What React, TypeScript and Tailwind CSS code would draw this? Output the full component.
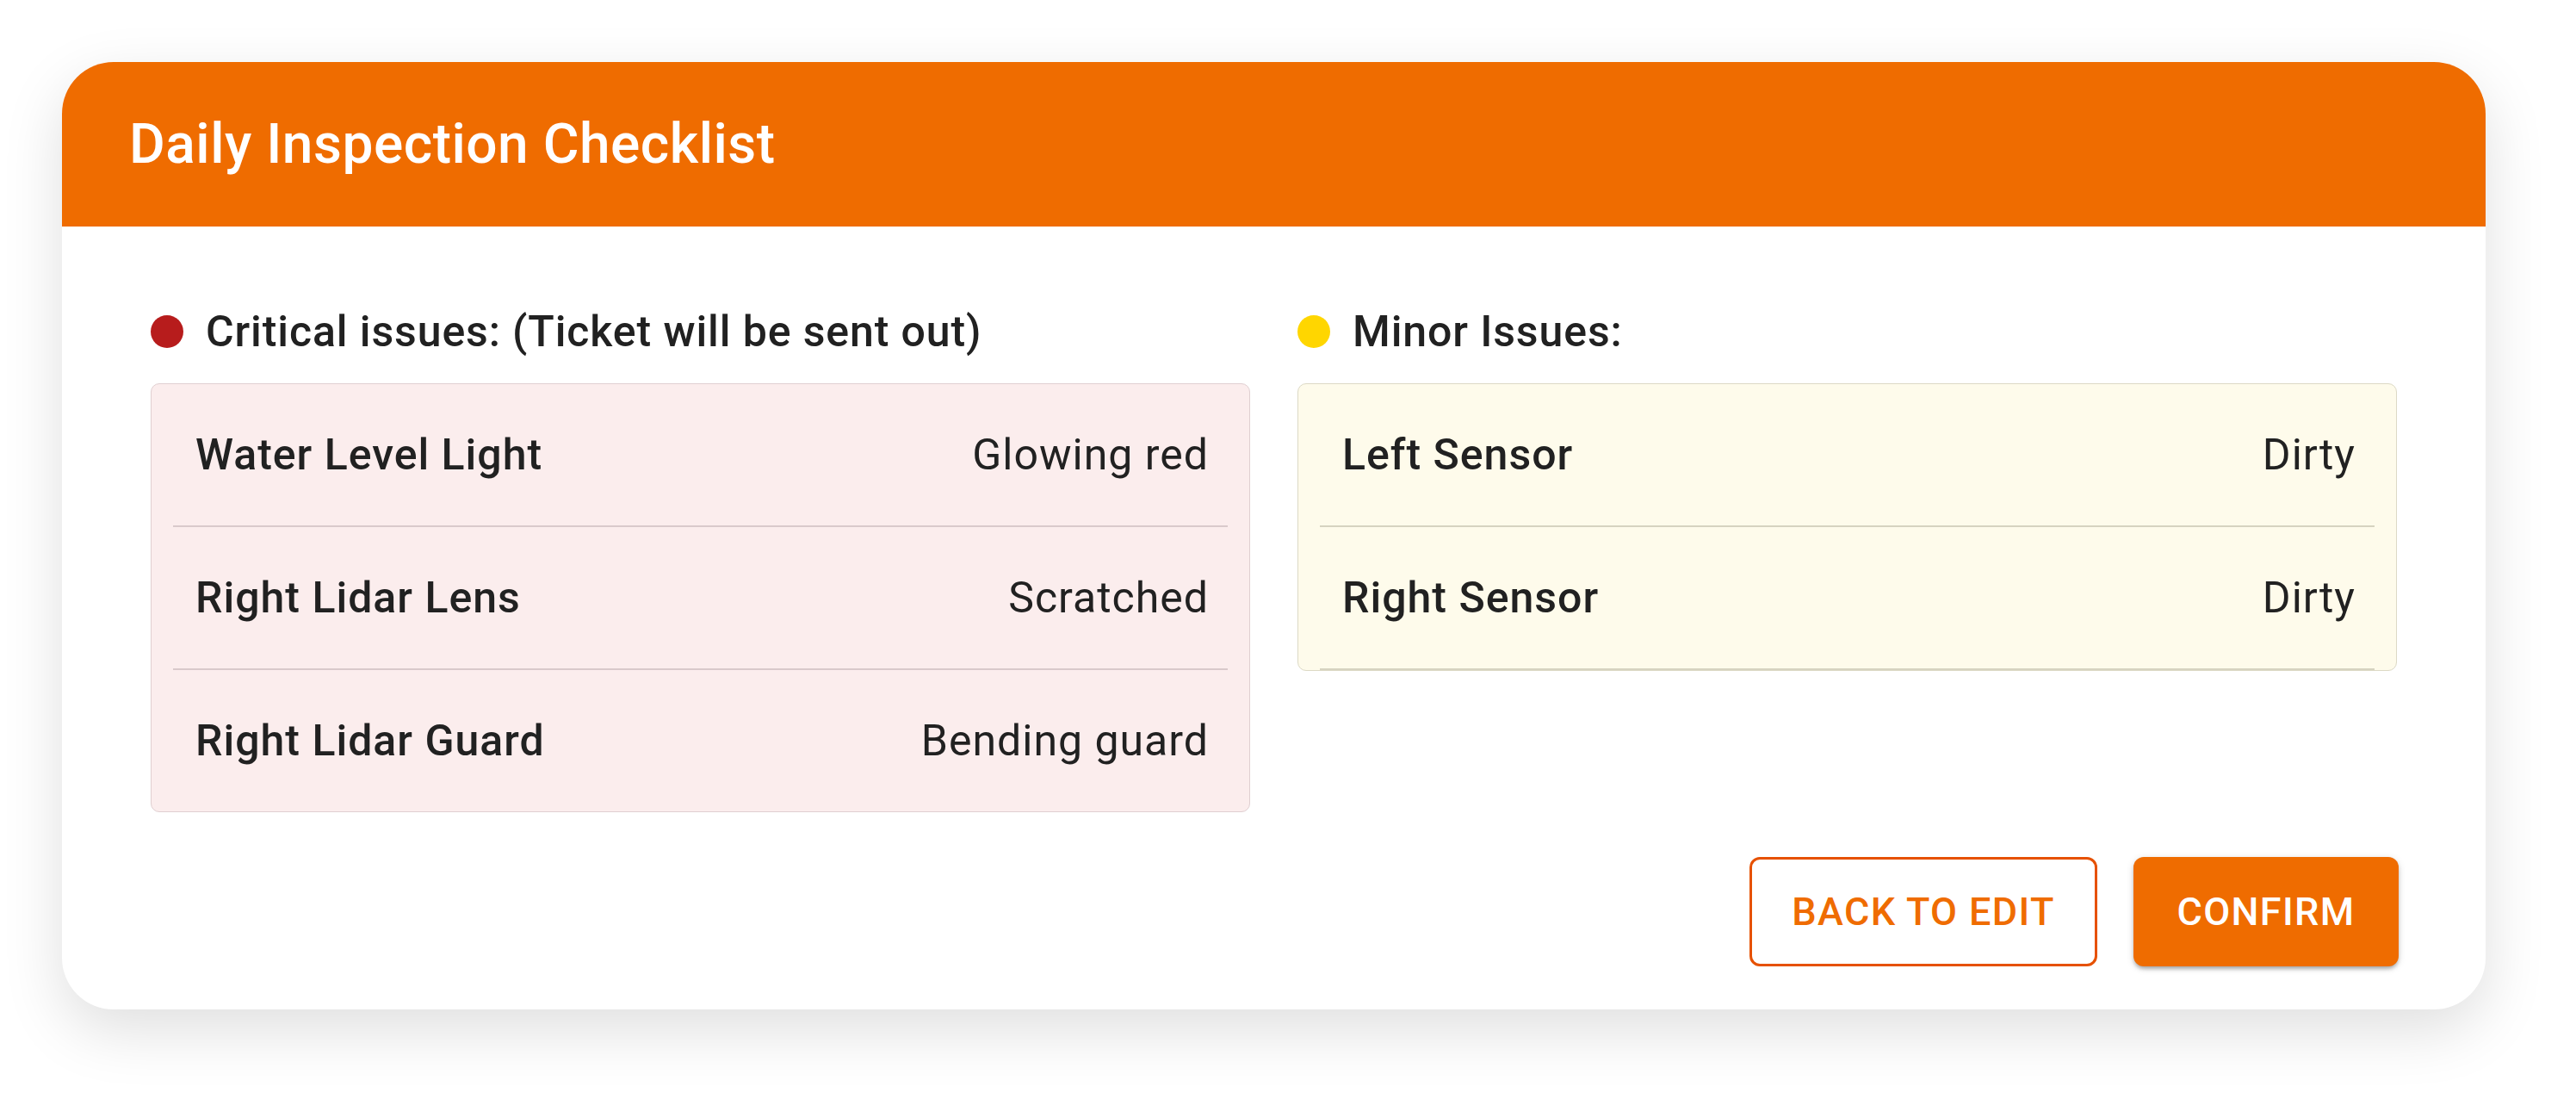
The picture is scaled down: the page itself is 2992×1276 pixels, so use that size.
const critical = [
  { part: "Water Level Light", state: "Glowing red" },
  { part: "Right Lidar Lens", state: "Scratched" },
  { part: "Right Lidar Guard", state: "Bending guard" },
];

const minor = [
  { part: "Left Sensor", state: "Dirty" },
  { part: "Right Sensor", state: "Dirty" },
];

type Item = { part: string; state: string };

function IssueList({
  title,
  dot,
  items,
  boxClass,
  lineClass,
  lastDivider,
}: {
  title: string;
  dot: string;
  items: Item[];
  boxClass: string;
  lineClass: string;
  lastDivider?: boolean;
}) {
  return (
    <div className="flex flex-col">
      <div className="flex h-[70px] items-center gap-[26px]">
        <span className={`h-[38px] w-[38px] rounded-full ${dot}`} />
        <span className="text-[50px] font-medium leading-none tracking-[0.018em] text-[#212121]">{title}</span>
      </div>
      <div className={`mt-[25px] rounded-[10px] border ${boxClass}`}>
        {items.map((it, i) => (
          <div key={it.part}>
            <div className="flex h-[164px] items-center justify-between pl-[51px] pr-[47px] text-[50px] tracking-[0.02em] text-[#212121]">
              <span className="font-medium">{it.part}</span>
              <span>{it.state}</span>
            </div>
            {(i < items.length - 1 || lastDivider) && (
              <div className={`mx-[25px] h-[2px] ${lineClass}`} />
            )}
          </div>
        ))}
      </div>
    </div>
  );
}

export default function App() {
  return (
    <div className="h-[1276px] w-[2992px] bg-white pl-[72px] pt-[72px] font-['Roboto',sans-serif]">
      <div className="w-[2815px] overflow-hidden rounded-[60px] bg-white shadow-[0_24px_70px_rgba(0,0,0,0.13)]">
        <div className="flex h-[191px] items-center bg-[#ef6c00] pl-[78px]">
          <h1 className="text-[64px] font-medium tracking-[0.008em] text-white">Daily Inspection Checklist</h1>
        </div>

        <div className="px-[103px] pb-[50px] pt-[87px]">
          <div className="grid grid-cols-2 gap-[55px]">
            <div>
              <IssueList
                title="Critical issues: (Ticket will be sent out)"
                dot="bg-[#b71c1c]"
                items={critical}
                boxClass="border-[#e0cfd1] bg-[#fbeded]"
                lineClass="bg-[#d9c9cb]"
              />
            </div>
            <div>
              <IssueList
                title="Minor Issues:"
                dot="bg-[#ffd600]"
                items={minor}
                boxClass="border-[#dcd9c5] bg-[#fefbeb]"
                lineClass="bg-[#d6d3c0]"
                lastDivider
              />
            </div>
          </div>

          <div className="mt-[52px] flex justify-end gap-[42px]">
            <button className="h-[127px] w-[404px] rounded-[12px] border-[3px] border-[#e65100] bg-white text-[45px] font-medium uppercase tracking-[0.03em] text-[#ef6c00]">
              Back to edit
            </button>
            <button className="mr-[-2px] h-[127px] w-[308px] rounded-[12px] bg-[#ef6c00] text-[45px] font-medium uppercase tracking-[0.03em] text-white shadow-[0_4px_4px_-2px_rgba(0,0,0,0.2),0_3px_5px_rgba(0,0,0,0.14),0_2px_10px_rgba(0,0,0,0.12)]">
              Confirm
            </button>
          </div>
        </div>
      </div>
    </div>
  );
}
